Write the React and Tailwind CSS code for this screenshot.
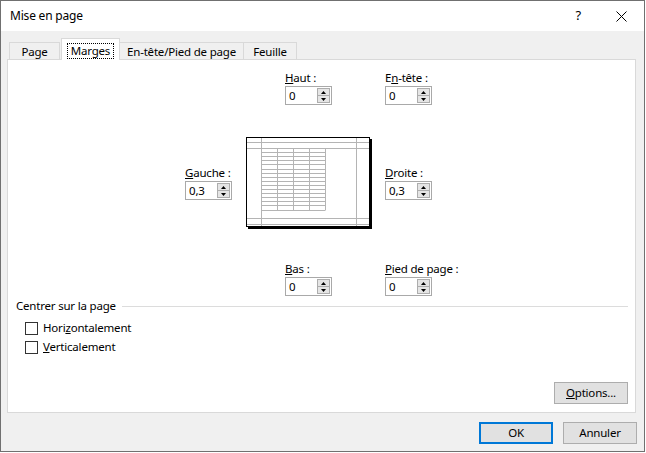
import React from "react";

const Arrow = ({ up }) => (
  <svg width="5" height="3" viewBox="0 0 5 3">
    <path d={up ? "M0 3h5L2.5 0z" : "M0 0h5L2.5 3z"} fill="#000" />
  </svg>
);

const Spin = ({ value }) => (
  <div className="flex h-[19px] w-[47px] items-center border border-[#a9a9a9] bg-white">
    <span className="flex-1 pl-[3px] leading-none text-black">{value}</span>
    <div className="mr-px flex h-[15px] w-[13px] flex-col">
      <div className="flex h-[8px] items-center justify-center border border-[#adadad] bg-[#e5e5e5]">
        <Arrow up />
      </div>
      <div className="-mt-px flex h-[8px] items-center justify-center border border-[#adadad] bg-[#e5e5e5]">
        <Arrow />
      </div>
    </div>
  </div>
);

const Field = ({ children, value, className = "" }) => (
  <div className={`flex flex-col ${className}`}>
    <div className="h-[16px] leading-[16px]">{children}</div>
    <Spin value={value} />
  </div>
);

const Preview = () => {
  const rows = Array.from({ length: 16 }, (_, i) => 11 + i * 4.1);
  const cols = [15, 31, 47, 63, 79];
  return (
    <svg width="126" height="92" viewBox="0 0 126 92">
      <rect x="2" y="2" width="124" height="90" fill="#000" />
      <rect x="0.5" y="0.5" width="123" height="89" fill="#fff" stroke="#000" />
      <g stroke="#b4b4b4" strokeWidth="1">
        <line x1="15.5" y1="1" x2="15.5" y2="89" />
        <line x1="110.5" y1="1" x2="110.5" y2="89" />
        <line x1="1" y1="5.5" x2="123" y2="5.5" />
        <line x1="1" y1="11.5" x2="123" y2="11.5" />
        <line x1="1" y1="81.5" x2="123" y2="81.5" />
        <line x1="1" y1="87.5" x2="123" y2="87.5" />
        {rows.map((y) => (
          <line key={y} x1="15" y1={Math.round(y) + 0.5} x2="79.5" y2={Math.round(y) + 0.5} />
        ))}
        {cols.map((x) => (
          <line key={x} x1={x + 0.5} y1="11" x2={x + 0.5} y2="73" />
        ))}
      </g>
    </svg>
  );
};

const Check = ({ children }) => (
  <div className="flex h-[16px] items-center gap-[5px] leading-[16px]">
    <div className="h-[13px] w-[13px] border border-[#333] bg-white" />
    <span>{children}</span>
  </div>
);

export default function App() {
  return (
    <div className="h-[453px] w-[646px] bg-white font-['Noto_Sans',sans-serif] text-[11.5px] tracking-[-0.2px] text-black">
      <div className="flex h-[452px] w-[645px] flex-col border border-[#707070] bg-[#f0f0f0]">
        {/* Title bar */}
        <div className="flex h-[30px] shrink-0 items-center bg-white">
          <span className="ml-[9px] text-[12px]">Mise en page</span>
          <span className="ml-auto mr-[35px] text-[13px]">?</span>
          <svg className="mr-[17px]" width="11" height="11" viewBox="0 0 11 11">
            <path d="M0.5 0.5L10.5 10.5M10.5 0.5L0.5 10.5" stroke="#000" strokeWidth="1" />
          </svg>
        </div>

        {/* Tabs */}
        <div className="ml-[8px] mt-[7px] flex h-[22px] items-end">
          <div className="flex h-[18px] w-[51px] items-center justify-center border border-b-0 border-[#d9d9d9]">Page</div>
          <div className="relative z-10 ml-px flex h-[22px] w-[59px] items-start justify-center border border-b-0 border-[#d9d9d9] bg-white pt-[4px]">
            <span className="border border-dotted border-black px-[3px] leading-[14px]">Marges</span>
          </div>
          <div className="-ml-px flex h-[18px] w-[125px] items-center justify-center border border-b-0 border-[#d9d9d9]">En-tête/Pied de page</div>
          <div className="-ml-px flex h-[18px] w-[54px] items-center justify-center border border-b-0 border-[#d9d9d9]">Feuille</div>
        </div>

        {/* Panel */}
        <div className="relative -mt-px ml-[6px] flex h-[354px] w-[629px] flex-col border border-[#d9d9d9] bg-white">
          <div className="ml-[177px] flex flex-col">
            <div className="mt-[10px] flex pl-[100px]">
              <Field value="0" className="w-[100px]"><u>H</u>aut :</Field>
              <Field value="0">E<u>n</u>-tête :</Field>
            </div>
            <div className="mt-[32px] flex">
              <Field value="0,3" className="mt-[28px] w-[61px]"><u>G</u>auche :</Field>
              <div className="w-[139px]">
                <Preview />
              </div>
              <Field value="0,3" className="mt-[28px]"><u>D</u>roite :</Field>
            </div>
            <div className="mt-[32px] flex pl-[100px]">
              <Field value="0" className="w-[100px]"><u>B</u>as :</Field>
              <Field value="0"><u>P</u>ied de page :</Field>
            </div>
          </div>

          <div className="ml-[8px] mr-[7px] mt-[2px] flex h-[16px] items-center gap-[6px] leading-[16px]">
            <span>Centrer sur la page</span>
            <div className="h-px flex-1 bg-[#dcdcdc]" />
          </div>
          <div className="ml-[17px] mt-[6px] flex flex-col gap-[3px]">
            <Check>Hori<u>z</u>ontalement</Check>
            <Check><u>V</u>erticalement</Check>
          </div>

          <div className="mb-[8px] mr-[7px] mt-auto flex justify-end">
            <button className="h-[22px] w-[74px] border border-[#adadad] bg-[#e1e1e1] leading-none">
              <u>O</u>ptions...
            </button>
          </div>
        </div>

        {/* Footer buttons */}
        <div className="mr-[7px] mt-[9px] flex justify-end gap-[10px]">
          <button className="h-[22px] w-[74px] border-2 border-[#0078d7] bg-[#e1e1e1] leading-none">OK</button>
          <button className="h-[22px] w-[74px] border border-[#adadad] bg-[#e1e1e1] leading-none">Annuler</button>
        </div>
      </div>
    </div>
  );
}
